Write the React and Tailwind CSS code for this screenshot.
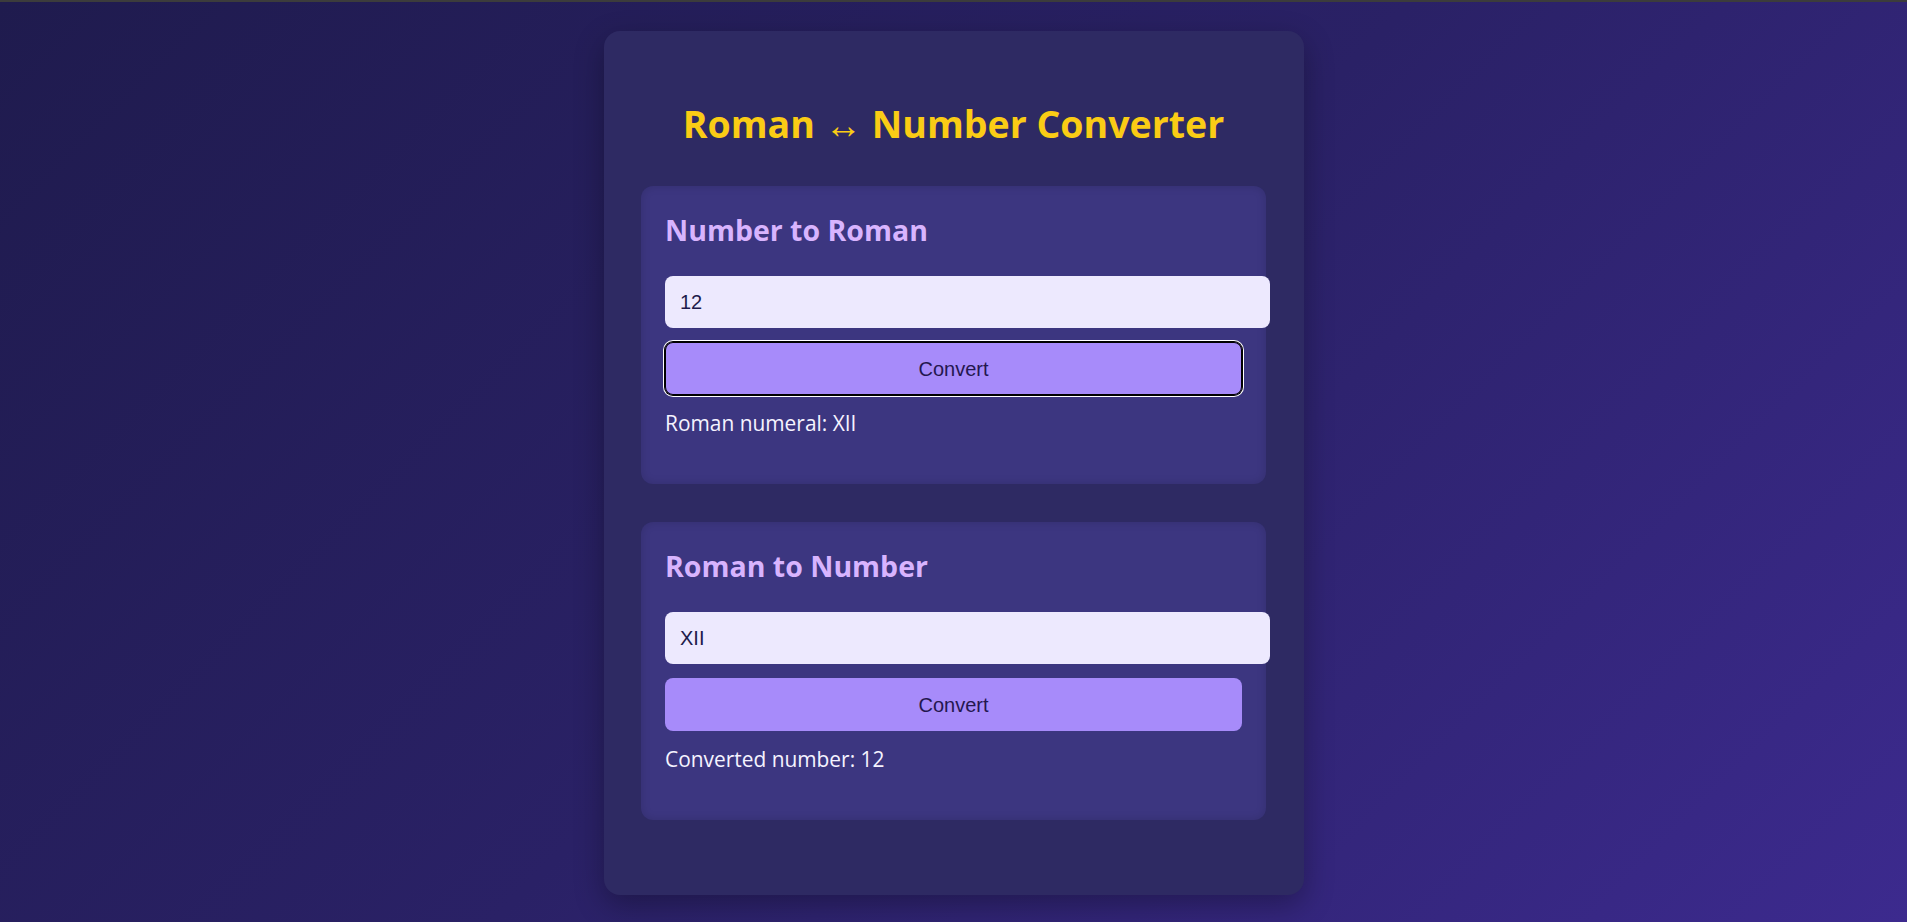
import React, { useState } from "react";

function toRoman(n) {
  const map = [[1000,"M"],[900,"CM"],[500,"D"],[400,"CD"],[100,"C"],[90,"XC"],[50,"L"],[40,"XL"],[10,"X"],[9,"IX"],[5,"V"],[4,"IV"],[1,"I"]];
  let r = "";
  for (const [v, s] of map) { while (n >= v) { r += s; n -= v; } }
  return r;
}
function fromRoman(s) {
  const v = { I: 1, V: 5, X: 10, L: 50, C: 100, D: 500, M: 1000 };
  let t = 0;
  const u = s.toUpperCase();
  for (let i = 0; i < u.length; i++) {
    const a = v[u[i]] || 0, b = v[u[i + 1]] || 0;
    t += a < b ? -a : a;
  }
  return t;
}

function Section({ title, value, setValue, onConvert, result, focused }) {
  return (
    <div className="rounded-xl bg-[#3c3680] p-6 shadow-[inset_0_0_10px_rgba(0,0,0,0.14)]">
      <h2 className="mt-[2px] text-[28.5px] font-bold leading-[36px] text-[#d8b4fe]" style={{ fontFamily: '"Open Sans", sans-serif' }}>
        {title}
      </h2>
      <input
        value={value}
        onChange={(e) => setValue(e.target.value)}
        className="mt-[28px] block h-[52px] w-[605px] rounded-lg border-0 bg-[#ede9fe] px-[15px] text-[20px] text-[#1e1b4b] outline-none"
        style={{ fontFamily: '"Liberation Sans", Arial, sans-serif' }}
      />
      <button
        onClick={onConvert}
        className={
          "mt-[14px] block h-[53px] w-full rounded-lg bg-[#a78bfa] text-[20px] text-[#24174f] " +
          (focused ? "shadow-[inset_0_0_0_1px_#000,0_0_0_1px_#000,0_0_0_2px_#fff]" : "")
        }
        style={{ fontFamily: '"Liberation Sans", Arial, sans-serif' }}
      >
        Convert
      </button>
      <p className="mt-[14px] mb-[23px] text-[20.9px] leading-[28px] text-[#f5f3ff]" style={{ fontFamily: '"Open Sans", sans-serif' }}>
        {result}
      </p>
    </div>
  );
}

export default function App() {
  const [num, setNum] = useState("12");
  const [rom, setRom] = useState("XII");
  const [r1, setR1] = useState("Roman numeral: XII");
  const [r2, setR2] = useState("Converted number: 12");
  return (
    <div className="min-h-[922px] border-t-2 border-[#3c3c3c] bg-[linear-gradient(135deg,#1f1b4e_0%,#2a2166_50%,#3c2a8e_100%)]">
      <div className="mx-auto mt-[29px] w-[700px] rounded-2xl bg-[#2e2a63] px-[37.5px] pb-[75px] pt-[69px] shadow-[0_10px_30px_rgba(0,0,0,0.3)]">
        <h1 className="text-center text-[37.5px] font-bold leading-[48px] text-[#facc15]" style={{ fontFamily: '"Open Sans", sans-serif' }}>
          Roman ↔ Number Converter
        </h1>
        <div className="mt-[38px]">
          <Section
            title="Number to Roman"
            value={num}
            setValue={setNum}
            focused
            onConvert={() => setR1("Roman numeral: " + toRoman(parseInt(num, 10) || 0))}
            result={r1}
          />
        </div>
        <div className="mt-[38px]">
          <Section
            title="Roman to Number"
            value={rom}
            setValue={setRom}
            onConvert={() => setR2("Converted number: " + fromRoman(rom))}
            result={r2}
          />
        </div>
      </div>
    </div>
  );
}
